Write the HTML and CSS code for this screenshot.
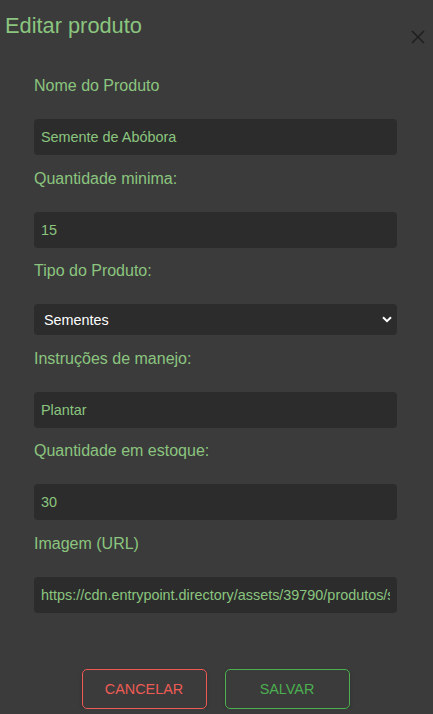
FILE: index.html
```html
<!DOCTYPE html>
<html lang="pt-BR">
<head>
<meta charset="utf-8">
<title>Editar produto</title>
<link rel="stylesheet" href="styles.css">
</head>
<body>
<div class="dialog">
  <div class="header">
    <h2 class="title">Editar produto</h2>
    <button class="close" type="button" aria-label="Fechar">
      <svg width="14" height="14" viewBox="0 0 14 14"><path d="M1 1L13 13M13 1L1 13" stroke="#1f1f1f" stroke-width="1.6" fill="none"/></svg>
    </button>
  </div>
  <form class="form">
    <label class="label">Nome do Produto</label>
    <input class="field" type="text" value="Semente de Abóbora">
    <label class="label">Quantidade minima:</label>
    <input class="field" type="text" value="15">
    <label class="label">Tipo do Produto:</label>
    <div class="select-wrap">
      <select class="select">
        <option>Sementes</option>
      </select>
      <svg class="chevron" width="10" height="7" viewBox="0 0 10 7"><path d="M1 1.2L5 5.2L9 1.2" stroke="#ffffff" stroke-width="2" fill="none"/></svg>
    </div>
    <label class="label">Instruções de manejo:</label>
    <input class="field" type="text" value="Plantar">
    <label class="label">Quantidade em estoque:</label>
    <input class="field" type="text" value="30">
    <label class="label">Imagem (URL)</label>
    <input class="field" type="text" value="https://cdn.entrypoint.directory/assets/39790/produtos/semente-abobora.png">
    <div class="actions">
      <button class="btn btn-cancel" type="button">Cancelar</button>
      <button class="btn btn-save" type="button">Salvar</button>
    </div>
  </form>
</div>
</body>
</html>
```

FILE: styles.css
```css
html, body {
  margin: 0;
  padding: 0;
  background: #3b3b3b;
}

body {
  font-family: "Liberation Sans", Arial, sans-serif;
  color: #8bc57f;
}

.dialog {
  width: 433px;
}

.header {
  display: flex;
  justify-content: space-between;
  align-items: flex-start;
  padding: 13px 8px 0 5px;
}

.title {
  margin: 0;
  font-size: 21.8px;
  line-height: 25px;
  font-weight: normal;
  color: #8bc57f;
}

.close {
  margin-top: 17px;
  width: 14px;
  height: 14px;
  padding: 0;
  border: none;
  background: transparent;
  display: flex;
}

.form {
  display: flex;
  flex-direction: column;
  padding: 18.5px 36px 0 34px;
}

.label {
  display: block;
  margin: 13.5px 0 23px;
  font-size: 16px;
  line-height: 20px;
  color: #8bc57f;
}

.field {
  box-sizing: border-box;
  width: 100%;
  height: 36px;
  padding: 0 7px;
  border: none;
  border-radius: 4px;
  background: #2c2c2c;
  color: #8bc57f;
  font-family: "Liberation Sans", Arial, sans-serif;
  font-size: 14.4px;
  outline: none;
}

.select-wrap {
  position: relative;
  height: 31px;
}

.select {
  appearance: none;
  -webkit-appearance: none;
  box-sizing: border-box;
  width: 100%;
  height: 31px;
  padding: 0 10px;
  border: none;
  border-radius: 4px;
  background: #2c2c2c;
  color: #ffffff;
  font-family: "Liberation Sans", Arial, sans-serif;
  font-size: 14.4px;
  outline: none;
}

.chevron {
  position: absolute;
  right: 5px;
  top: 12px;
  pointer-events: none;
}

.actions {
  display: flex;
  justify-content: center;
  gap: 18px;
  margin-top: 56px;
}

.btn {
  box-sizing: border-box;
  width: 125px;
  height: 40px;
  border-radius: 5px;
  background: #3b3b3b;
  font-family: "Liberation Sans", Arial, sans-serif;
  font-size: 14.4px;
  text-transform: uppercase;
  box-shadow: 0 2px 4px rgba(0, 0, 0, 0.2);
  cursor: pointer;
}

.btn-cancel {
  border: 1px solid #ee5b55;
  color: #ee5b55;
}

.btn-save {
  border: 1px solid #4caf50;
  color: #4caf50;
}
```
